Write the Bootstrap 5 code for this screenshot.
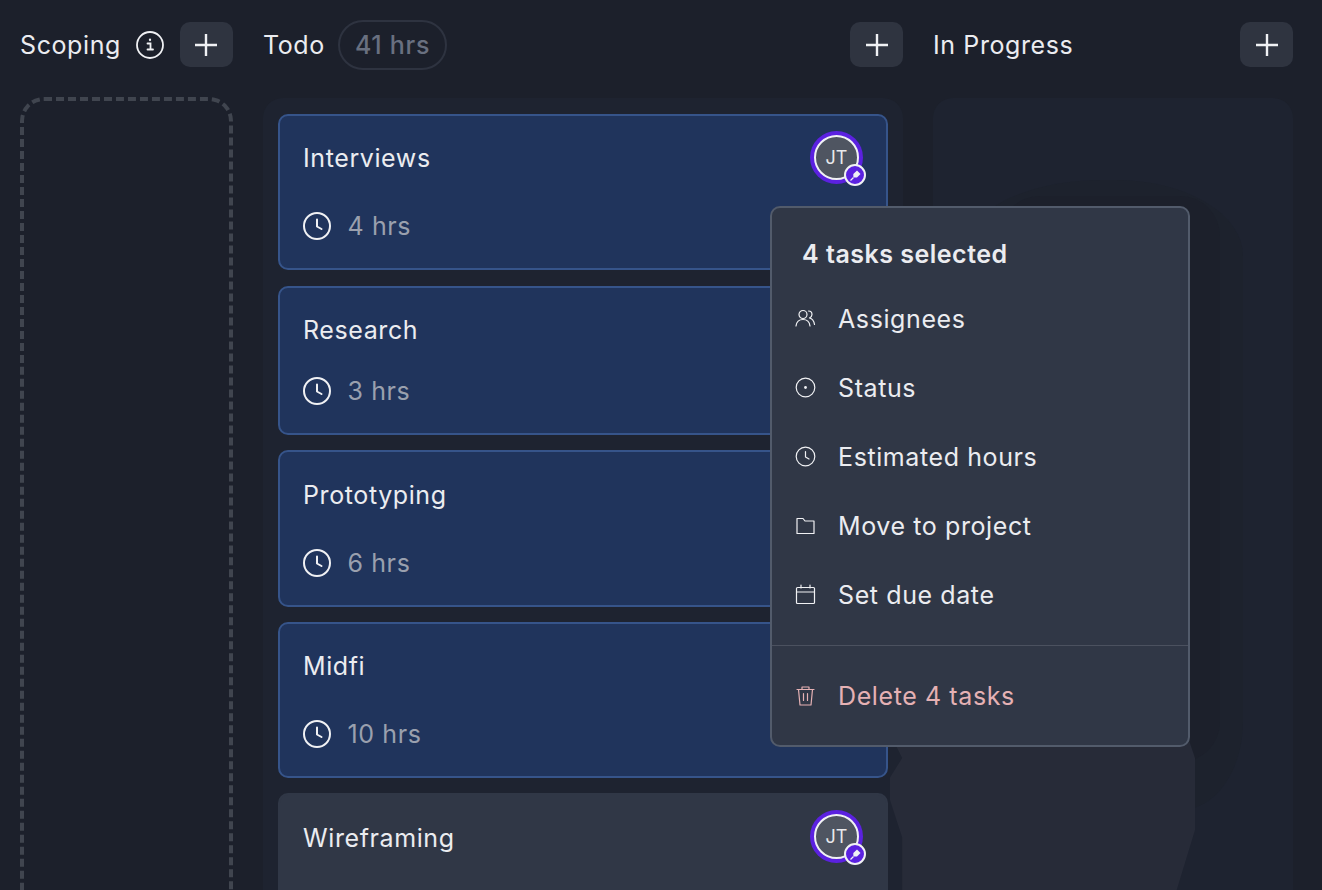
<!DOCTYPE html>
<html lang="en">
<head>
  <meta charset="UTF-8">
  <title>Board</title>
  <meta name="viewport" content="width=device-width, initial-scale=1">
  <link href="https://cdn.jsdelivr.net/npm/bootstrap@5.3.0/dist/css/bootstrap.min.css" rel="stylesheet">
  <style>
    html, body { height: 890px; overflow: hidden; }
    body { background: #1c202b; color: #ebecf0; font-family: Inter, "Noto Sans", sans-serif; font-size: 25px; letter-spacing: .6px; line-height: 36px; }
    .board { position: relative; height: 890px; overflow: hidden; padding: 22px 29px 0 20px; gap: 30px; }
    .col-scoping { width: 213px; }
    .col-todo { width: 640px; }
    .col-progress { width: 360px; }
    .col-head { height: 45px; margin-bottom: 31px; }
    .add-btn { width: 53px; height: 45px; border-radius: 10px; background: #2f3440; border: 0; padding: 0; }
    .hrs-pill { height: 50px; margin: -2px 0 -2px 13px; padding: 0 15px; border: 2px solid #2e3340; border-radius: 25px; color: #697080; font-weight: 500; letter-spacing: .7px; }
    .drop-zone { height: 900px; margin-top: -1px; border: 4px dashed #40454f; border-radius: 24px; }
    .lane { height: 900px; padding: 16px 15px; background: #1e2330; border-radius: 20px; gap: 15px; }
    .task { position: relative; flex: none; padding: 24px 23px 24px; height: 157px; border: 2px solid #36548a; border-radius: 10px; background: #20345c; }
    .task-first { height: 156px; margin-bottom: 1px; padding-bottom: 24px; }
    .task-short { height: 149px; }
    .task-mid { height: 156px; }
    .task-low { padding-top: 25px; }
    .task-plain { background: #303746; border-color: #303746; }
    .task-title { height: 36px; }
    .hrs-text { color: #9aa0ae; }
    .clock-ico { margin-right: 16.500px; }
    .who { position: relative; width: 53px; height: 53px; margin: -9px 0 -8px 0; border-radius: 50%; background: #5b21e0; padding: 4px; }
    .task-low .who { margin: -10px 0 -7px 0; }
    .who-face { width: 45px; height: 45px; border-radius: 50%; border: 2px solid #f0f1f4; background: #4f5561; font-size: 18px; letter-spacing: 0; line-height: 1; color: #e8e9ec; }
    .who-pin { position: absolute; right: -3px; bottom: -2px; width: 22px; height: 22px; border-radius: 50%; border: 2px solid #f0f1f4; background: #5b21e0; }
    .menu-shade { position: absolute; left: 890px; top: 740px; width: 305px; height: 150px; background: #272b38; clip-path: polygon(0 25%, 4% 12%, 1% 0, 98% 0, 100% 12%, 100% 60%, 94% 100%, 4% 100%, 4% 65%, 0 40%); }
    .menu-glow { position: absolute; left: 960px; top: 180px; width: 283px; height: 630px; border-radius: 50% 45% 22% 20% / 12% 12% 14% 10%; background: #1d222d; }
    .menu-glow-in { position: absolute; left: 1000px; top: 196px; width: 220px; height: 566px; border-radius: 40px; background: #1c202b; }
    .bulk-menu { position: absolute; left: 770px; top: 206px; width: 420px; height: 541px; background: #303746; border: 2px solid #525b6b; border-radius: 10px; }
    .bulk-title { padding: 28px 30px 0; height: 76px; font-weight: 600; letter-spacing: .5px; }
    .bulk-item { height: 69px; padding-left: 23px; gap: 22px; }
    .bulk-list { padding-bottom: 16px; border-bottom: 1px solid #4b515f; }
    .bulk-del { margin-top: 15px; color: #e5b1b4; }
  </style>
</head>
<body>

<div class="board d-flex">

  <!-- Scoping -->
  <div class="col-scoping">
    <div class="col-head d-flex align-items-center justify-content-between">
      <span>Scoping</span>
      <svg width="28" height="28" viewBox="0 0 28 28" fill="none" stroke="#f0f1f4" stroke-width="1.800" stroke-linecap="round"><circle cx="14" cy="14" r="13"/><path d="M11.500 12.500h3v6M11.500 18.500h5.500"/><path d="M14 8.500v.6" stroke-width="2.200"/></svg>
      <button class="add-btn d-flex align-items-center justify-content-center"><svg width="24" height="24" viewBox="0 0 24 24" stroke="#f0f1f4" stroke-width="2.400"><path d="M12 1v22M1 12h22"/></svg></button>
    </div>
    <div class="drop-zone"></div>
  </div>

  <!-- Todo -->
  <div class="col-todo">
    <div class="col-head d-flex align-items-center">
      <span>Todo</span>
      <span class="hrs-pill d-flex align-items-center">41 hrs</span>
      <button class="add-btn ms-auto d-flex align-items-center justify-content-center"><svg width="24" height="24" viewBox="0 0 24 24" stroke="#f0f1f4" stroke-width="2.400"><path d="M12 1v22M1 12h22"/></svg></button>
    </div>
    <div class="lane d-flex flex-column">

      <div class="task task-first d-flex flex-column justify-content-between">
        <div class="task-title d-flex align-items-center justify-content-between">
          <span>Interviews</span>
          <div class="who">
            <div class="who-face d-flex align-items-center justify-content-center">JT</div>
            <div class="who-pin d-flex align-items-center justify-content-center"><svg width="13" height="13" viewBox="0 0 13 13" fill="#f0f1f4"><path d="M8 1.500l3.500 3.500-3.500 3.500H5L4.300 7.800V5z"/><path d="M4.500 8.500L1.500 11.500" stroke="#f0f1f4" stroke-width="1.300"/></svg></div>
          </div>
        </div>
        <div class="d-flex align-items-center">
          <svg class="clock-ico" width="28" height="28" viewBox="0 0 28 28" fill="none" stroke="#f0f1f4" stroke-width="2" stroke-linecap="round" stroke-linejoin="round"><circle cx="14" cy="14" r="13"/><path d="M14 7.500v7l4.500 2.500"/></svg>
          <span class="hrs-text">4 hrs</span>
        </div>
      </div>

      <div class="task task-short d-flex flex-column justify-content-between">
        <div class="task-title"><span>Research</span></div>
        <div class="d-flex align-items-center">
          <svg class="clock-ico" width="28" height="28" viewBox="0 0 28 28" fill="none" stroke="#f0f1f4" stroke-width="2" stroke-linecap="round" stroke-linejoin="round"><circle cx="14" cy="14" r="13"/><path d="M14 7.500v7l4.500 2.500"/></svg>
          <span class="hrs-text">3 hrs</span>
        </div>
      </div>

      <div class="task task-low d-flex flex-column justify-content-between">
        <div class="task-title"><span>Prototyping</span></div>
        <div class="d-flex align-items-center">
          <svg class="clock-ico" width="28" height="28" viewBox="0 0 28 28" fill="none" stroke="#f0f1f4" stroke-width="2" stroke-linecap="round" stroke-linejoin="round"><circle cx="14" cy="14" r="13"/><path d="M14 7.500v7l4.500 2.500"/></svg>
          <span class="hrs-text">6 hrs</span>
        </div>
      </div>

      <div class="task task-mid d-flex flex-column justify-content-between">
        <div class="task-title"><span>Midfi</span></div>
        <div class="d-flex align-items-center">
          <svg class="clock-ico" width="28" height="28" viewBox="0 0 28 28" fill="none" stroke="#f0f1f4" stroke-width="2" stroke-linecap="round" stroke-linejoin="round"><circle cx="14" cy="14" r="13"/><path d="M14 7.500v7l4.500 2.500"/></svg>
          <span class="hrs-text">10 hrs</span>
        </div>
      </div>

      <div class="task task-low task-plain">
        <div class="task-title d-flex align-items-center justify-content-between">
          <span>Wireframing</span>
          <div class="who">
            <div class="who-face d-flex align-items-center justify-content-center">JT</div>
            <div class="who-pin d-flex align-items-center justify-content-center"><svg width="13" height="13" viewBox="0 0 13 13" fill="#f0f1f4"><path d="M8 1.500l3.500 3.500-3.500 3.500H5L4.300 7.800V5z"/><path d="M4.500 8.500L1.500 11.500" stroke="#f0f1f4" stroke-width="1.300"/></svg></div>
          </div>
        </div>
      </div>

    </div>
  </div>

  <!-- In Progress -->
  <div class="col-progress">
    <div class="col-head d-flex align-items-center justify-content-between">
      <span>In Progress</span>
      <button class="add-btn d-flex align-items-center justify-content-center"><svg width="24" height="24" viewBox="0 0 24 24" stroke="#f0f1f4" stroke-width="2.400"><path d="M12 1v22M1 12h22"/></svg></button>
    </div>
    <div class="lane"></div>
  </div>

  <!-- shadow the menu throws over the board -->
  <div class="menu-glow"></div>
  <div class="menu-glow-in"></div>
  <div class="menu-shade"></div>

  <!-- Bulk actions menu -->
  <div class="bulk-menu">
    <div class="bulk-title">4 tasks selected</div>
    <div class="bulk-list">
      <div class="bulk-item d-flex align-items-center">
        <svg width="21" height="21" viewBox="0 0 21 21" fill="none" stroke="#f0f1f4" stroke-width="1.200" stroke-linecap="round" stroke-linejoin="round"><circle cx="8" cy="6.500" r="4"/><path d="M1 18c.5-4 3-6.500 7-6.500s6.500 2.500 7 6.500"/><path d="M13.500 3c2.500 0 3.500 1.500 3.500 3.500s-1.500 3-2.500 3.500c2.500.5 4.500 3 5 6.500"/></svg>
        <span>Assignees</span>
      </div>
      <div class="bulk-item d-flex align-items-center">
        <svg width="21" height="21" viewBox="0 0 21 21" fill="none" stroke="#f0f1f4" stroke-width="1.200"><circle cx="10.500" cy="10.500" r="9.300"/><circle cx="10.500" cy="10.500" r="1.400" fill="#f0f1f4" stroke="none"/></svg>
        <span>Status</span>
      </div>
      <div class="bulk-item d-flex align-items-center">
        <svg width="21" height="21" viewBox="0 0 21 21" fill="none" stroke="#f0f1f4" stroke-width="1.200" stroke-linecap="round" stroke-linejoin="round"><circle cx="10.500" cy="10.500" r="9.300"/><path d="M10.500 5.500v5.500l3.500 2"/></svg>
        <span>Estimated hours</span>
      </div>
      <div class="bulk-item d-flex align-items-center">
        <svg width="21" height="21" viewBox="0 0 21 21" fill="none" stroke="#f0f1f4" stroke-width="1.200" stroke-linejoin="round"><path d="M2 3.500h6l2 2.500h9v12.500H2z"/></svg>
        <span>Move to project</span>
      </div>
      <div class="bulk-item d-flex align-items-center">
        <svg width="21" height="21" viewBox="0 0 21 21" fill="none" stroke="#f0f1f4" stroke-width="1.200" stroke-linecap="round" stroke-linejoin="round"><rect x="1.500" y="3.500" width="18" height="16" rx="1"/><path d="M1.500 8h18M6 1v3M15 1v3"/></svg>
        <span>Set due date</span>
      </div>
    </div>
    <div class="bulk-item bulk-del d-flex align-items-center">
      <svg width="21" height="21" viewBox="0 0 21 21" fill="none" stroke="#e5b1b4" stroke-width="1.200" stroke-linecap="round" stroke-linejoin="round"><path d="M2 4.500h17M7 4.500V2h7v2.500M3.500 4.500L5 20h11l1.500-15.500M8.500 8.500v7M12.500 8.500v7"/></svg>
      <span>Delete 4 tasks</span>
    </div>
  </div>

</div>

<script src="https://cdn.jsdelivr.net/npm/bootstrap@5.3.0/dist/js/bootstrap.bundle.min.js"></script>
</body>
</html>
